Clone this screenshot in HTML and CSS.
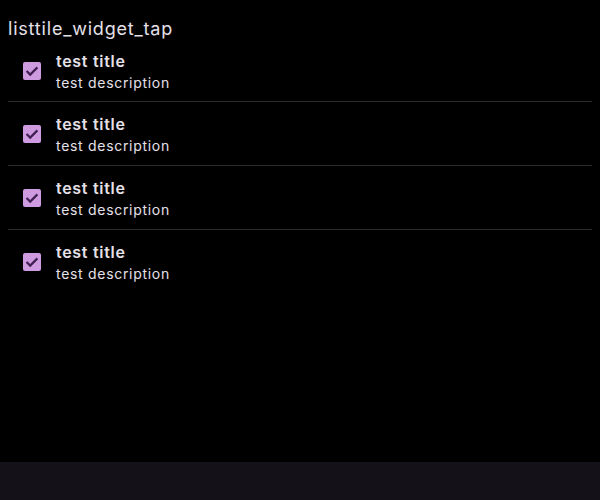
FILE: index.html
```html
<!DOCTYPE html>
<html>
<head>
<meta charset="utf-8">
<link rel="stylesheet" href="styles.css">
</head>
<body>
<div class="page">
  <div class="content">
    <h1 class="heading">listtile_widget_tap</h1>
    <ul class="list">
      <li class="tile">
        <span class="check"><svg viewBox="0 0 18 18" width="18" height="18"><path d="M3.6 9 L7.2 12.6 L14.4 5.4" fill="none" stroke="#3f1f50" stroke-width="2.2"/></svg></span>
        <div class="texts"><div class="title">test title</div><div class="desc">test description</div></div>
      </li>
      <li class="tile">
        <span class="check"><svg viewBox="0 0 18 18" width="18" height="18"><path d="M3.6 9 L7.2 12.6 L14.4 5.4" fill="none" stroke="#3f1f50" stroke-width="2.2"/></svg></span>
        <div class="texts"><div class="title">test title</div><div class="desc">test description</div></div>
      </li>
      <li class="tile">
        <span class="check"><svg viewBox="0 0 18 18" width="18" height="18"><path d="M3.6 9 L7.2 12.6 L14.4 5.4" fill="none" stroke="#3f1f50" stroke-width="2.2"/></svg></span>
        <div class="texts"><div class="title">test title</div><div class="desc">test description</div></div>
      </li>
      <li class="tile last">
        <span class="check"><svg viewBox="0 0 18 18" width="18" height="18"><path d="M3.6 9 L7.2 12.6 L14.4 5.4" fill="none" stroke="#3f1f50" stroke-width="2.2"/></svg></span>
        <div class="texts"><div class="title">test title</div><div class="desc">test description</div></div>
      </li>
    </ul>
  </div>
  <div class="bottom"></div>
</div>
</body>
</html>
```
FILE: styles.css
```css
html, body {
  margin: 0;
  padding: 0;
  background: #000;
}
body {
  font-family: Inter, "Open Sans", sans-serif;
  color: #e6e0e9;
}
.page {
  height: 500px;
  display: flex;
  flex-direction: column;
}
.content {
  flex: 1;
}
.heading {
  margin: 0;
  padding: 18px 8px 0 8px;
  font-size: 18px;
  font-weight: 400;
  line-height: 22px;
  letter-spacing: 0.8px;
}
.list {
  list-style: none;
  margin: 0 8px;
  padding: 0;
}
.tile {
  height: 62px;
  border-bottom: 1px solid #2e2c33;
  display: flex;
  align-items: center;
  gap: 15px;
  padding-left: 15px;
  padding-top: 1px;
}
.list .tile:first-child {
  height: 61px;
  padding-top: 0;
}
.tile.last {
  border-bottom: none;
}
.check {
  width: 18px;
  height: 18px;
  border-radius: 2px;
  background: #cf9be0;
  display: block;
  flex: none;
}
.check svg {
  display: block;
}
.texts {
  display: flex;
  flex-direction: column;
  padding-top: 2px;
}
.title {
  font-size: 16px;
  font-weight: 600;
  line-height: 22px;
  letter-spacing: 0.7px;
}
.desc {
  font-size: 14px;
  line-height: 22px;
  letter-spacing: 0.7px;
}
.bottom {
  height: 38px;
  background: #141218;
}
```
